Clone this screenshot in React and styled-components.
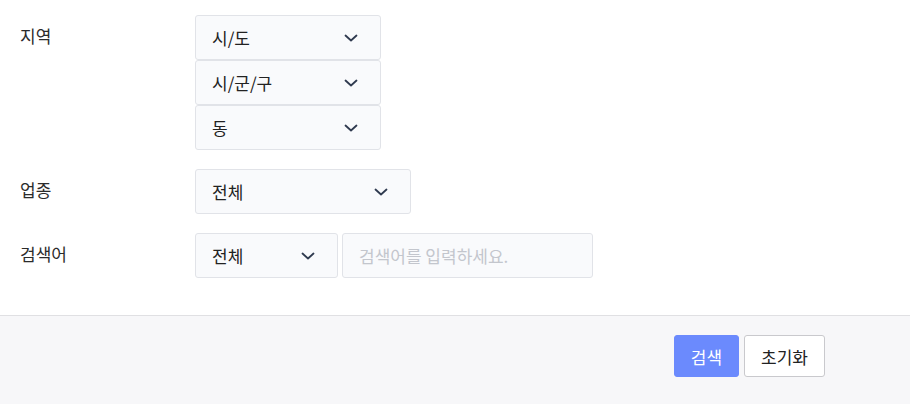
import styled, { createGlobalStyle } from 'styled-components';

const GlobalStyle = createGlobalStyle`
  * { box-sizing: border-box; }
  body {
    margin: 0;
    background: #fff;
    font-family: "Noto Sans CJK KR", "Noto Sans", sans-serif;
    color: #222;
  }
`;

const Page = styled.div`
  width: 910px;
  height: 404px;
  display: flex;
  flex-direction: column;
`;

const Form = styled.div`
  display: flex;
  flex-direction: column;
  gap: 19px;
  padding: 15px 20px 37px;
`;

const Row = styled.div`
  display: flex;
  align-items: flex-start;
`;

const Label = styled.div`
  width: 175px;
  height: 45px;
  display: flex;
  align-items: center;
  font-size: 17px;
  color: #2b2b2b;
  margin-top: -2px;
`;

const Stack = styled.div`
  display: flex;
  flex-direction: ${(p) => (p.$column ? 'column' : 'row')};
  gap: ${(p) => (p.$column ? '0' : '4px')};
`;

const SelectBox = styled.div`
  width: ${(p) => p.$width}px;
  height: 45px;
  display: flex;
  align-items: center;
  justify-content: space-between;
  padding: 0 22px 0 16px;
  background: #f9fafc;
  border: 1px solid #e1e3e8;
  border-radius: 3px;
  font-size: 17px;
  color: #222;
`;

const Input = styled.input`
  width: ${(p) => p.$width}px;
  height: 45px;
  padding: 0 16px;
  background: #f9fafc;
  border: 1px solid #e1e3e8;
  border-radius: 3px;
  font-family: inherit;
  font-size: 17px;
  outline: none;
  &::placeholder { color: #c3c6cd; }
`;

const Footer = styled.div`
  flex: 1;
  background: #f7f7f9;
  border-top: 1px solid #e0e0e3;
  display: flex;
  justify-content: flex-end;
  align-items: flex-start;
  gap: 5px;
  padding: 19px 85px 0 0;
`;

const Button = styled.button`
  width: ${(p) => p.$width}px;
  height: 42px;
  padding: 0;
  border-radius: 3px;
  font-family: inherit;
  font-size: 17px;
  cursor: pointer;
  background: ${(p) => (p.$primary ? '#6b8afd' : '#fff')};
  color: ${(p) => (p.$primary ? '#fff' : '#222')};
  border: 1px solid ${(p) => (p.$primary ? '#6b8afd' : '#c9c9cd')};
`;

const Chevron = () => (
  <svg width="14" height="8" viewBox="0 0 14 8" fill="none">
    <path d="M1.5 1.5L7 6.5L12.5 1.5" stroke="#2f3a4f" strokeWidth="1.8" strokeLinecap="round" strokeLinejoin="round" />
  </svg>
);

function Select({ value, width }) {
  return (
    <SelectBox $width={width}>
      <span>{value}</span>
      <Chevron />
    </SelectBox>
  );
}

export default function App() {
  return (
    <Page>
      <GlobalStyle />
      <Form>
        <Row>
          <Label>지역</Label>
          <Stack $column>
            <Select value="시/도" width={186} />
            <Select value="시/군/구" width={186} />
            <Select value="동" width={186} />
          </Stack>
        </Row>
        <Row>
          <Label>업종</Label>
          <Select value="전체" width={216} />
        </Row>
        <Row>
          <Label>검색어</Label>
          <Stack>
            <Select value="전체" width={143} />
            <Input $width={251} placeholder="검색어를 입력하세요." />
          </Stack>
        </Row>
      </Form>
      <Footer>
        <Button $primary $width={65}>검색</Button>
        <Button $width={81}>초기화</Button>
      </Footer>
    </Page>
  );
}
